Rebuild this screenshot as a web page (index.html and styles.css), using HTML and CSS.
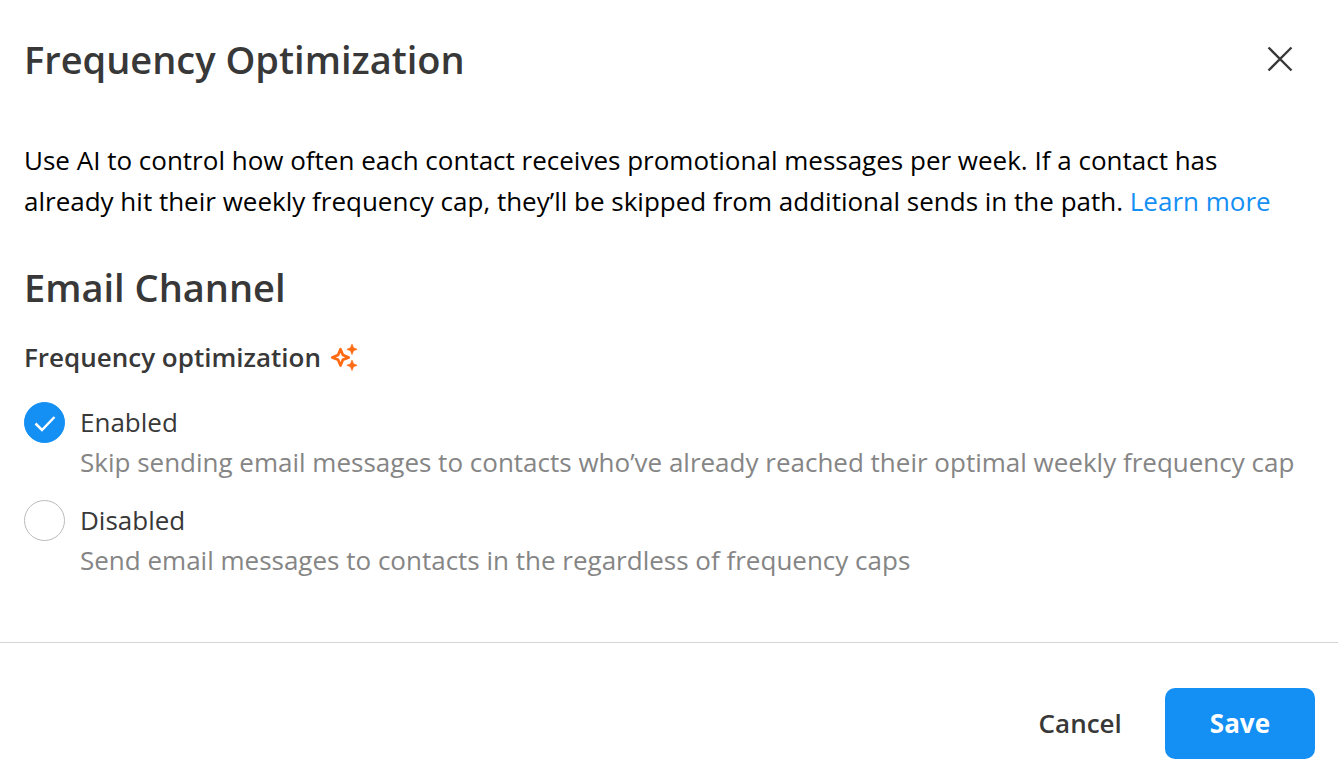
FILE: index.html
```html
<!DOCTYPE html>
<html lang="en">
<head>
<meta charset="utf-8">
<title>Frequency Optimization</title>
<link rel="stylesheet" href="styles.css">
</head>
<body>
<main class="dialog" role="dialog" aria-labelledby="dialog-title">
  <header class="dialog-header">
    <h1 class="title" id="dialog-title">Frequency Optimization</h1>
    <button class="close" type="button" aria-label="Close">
      <svg width="26" height="26" viewBox="0 0 26 26" fill="none" stroke="currentColor" stroke-width="2.3"><path d="M1.500 1.500 24.500 24.500M24.500 1.500 1.500 24.500"/></svg>
    </button>
  </header>
  <div class="dialog-body">
    <p class="intro">Use AI to control how often each contact receives promotional messages per week. If a contact has already hit their weekly frequency cap, they’ll be skipped from additional sends in the path. <a class="link" href="#">Learn more</a></p>
    <h2 class="title section-title">Email Channel</h2>
    <fieldset class="options">
      <legend class="legend">Frequency optimization
        <svg class="sparkle" width="28" height="28" viewBox="0 0 28 28" aria-hidden="true"><path fill="none" stroke="#ff6a13" stroke-width="2.7" stroke-linejoin="round" d="M10.500 6.200 12.900 12 18.700 14.400 12.900 16.800 10.500 22.600 8.100 16.800 2.300 14.400 8.100 12Z"/><path fill="#ff6a13" stroke="#ff6a13" stroke-width=".6" stroke-linejoin="round" d="M22 1 23.500 4.800 27.200 6.300 23.500 7.800 22 11.600 20.500 7.800 16.800 6.300 20.500 4.800ZM22 17 23.500 20.800 27.200 22.300 23.500 23.800 22 27.600 20.500 23.800 16.800 22.300 20.500 20.800Z"/></svg>
      </legend>
      <div class="option">
        <input class="radio" type="radio" name="frequency" id="enabled" aria-describedby="enabled-help" checked>
        <label class="option-label" for="enabled">Enabled</label>
        <p class="help" id="enabled-help">Skip sending email messages to contacts who’ve already reached their optimal weekly frequency cap</p>
        <svg class="check" width="22" height="18" viewBox="0 0 22 18" fill="none" stroke="#fff" stroke-width="2.500" aria-hidden="true"><path d="M1.500 9.500 8 16 20.500 3"/></svg>
      </div>
      <div class="option">
        <input class="radio" type="radio" name="frequency" id="disabled" aria-describedby="disabled-help">
        <label class="option-label" for="disabled">Disabled</label>
        <p class="help" id="disabled-help">Send email messages to contacts in the regardless of frequency caps</p>
      </div>
    </fieldset>
  </div>
  <footer class="dialog-footer">
    <button class="button" type="button">Cancel</button>
    <button class="button primary" type="button">Save</button>
  </footer>
</main>
</body>
</html>
```
FILE: styles.css
```css
* { box-sizing: border-box; }
body {
  margin: 0;
  background: #fff;
  color: #383838;
  font: 26px/40px "Open Sans", sans-serif;
}
h1, h2, p { margin: 0; }
button { font: inherit; color: inherit; cursor: pointer; }
.dialog-header {
  display: flex;
  align-items: center;
  justify-content: space-between;
  padding: 31px 39px 0 24px;
}
.title { font-size: 38px; line-height: 56px; font-weight: 600; }
.close {
  display: flex;
  padding: 6px;
  border: 0;
  background: none;
}
.dialog-body { padding: 53px 24px 63px; }
.intro { padding-right: 16px; color: #000; line-height: 41px; }
.link { color: #148ff4; text-decoration: none; }
.section-title { margin-top: 37px; }
.options {
  display: flex;
  flex-direction: column;
  gap: 19px;
  min-width: 0;
  margin: 0;
  padding: 0;
  border: 0;
}
.legend {
  display: flex;
  align-items: center;
  gap: 9px;
  padding: 22px 0 25px;
  font-weight: 600;
}
.option {
  display: grid;
  grid-template-columns: 41px 1fr;
  column-gap: 15px;
  white-space: nowrap;
}
.radio {
  appearance: none;
  grid-area: 1 / 1;
  width: 41px;
  height: 41px;
  margin: 0;
  border: 1px solid #bbb;
  border-radius: 50%;
}
.radio:checked { border-color: #148ff4; background: #148ff4; }
.check { grid-area: 1 / 1; place-self: center; pointer-events: none; }
.option-label { grid-area: 1 / 2; }
.help { grid-area: 2 / 2; line-height: 38px; color: #858585; }
.dialog-footer {
  display: flex;
  justify-content: flex-end;
  padding: 45px 23px 20px;
  border-top: 1px solid #d5d5d5;
}
.button {
  padding: 15px 43px;
  border: 0;
  border-radius: 10px;
  background: none;
  font-weight: 600;
  line-height: 41px;
}
.primary { padding: 15px 45px; background: #148ff4; color: #fff; font-weight: 700; }
```
